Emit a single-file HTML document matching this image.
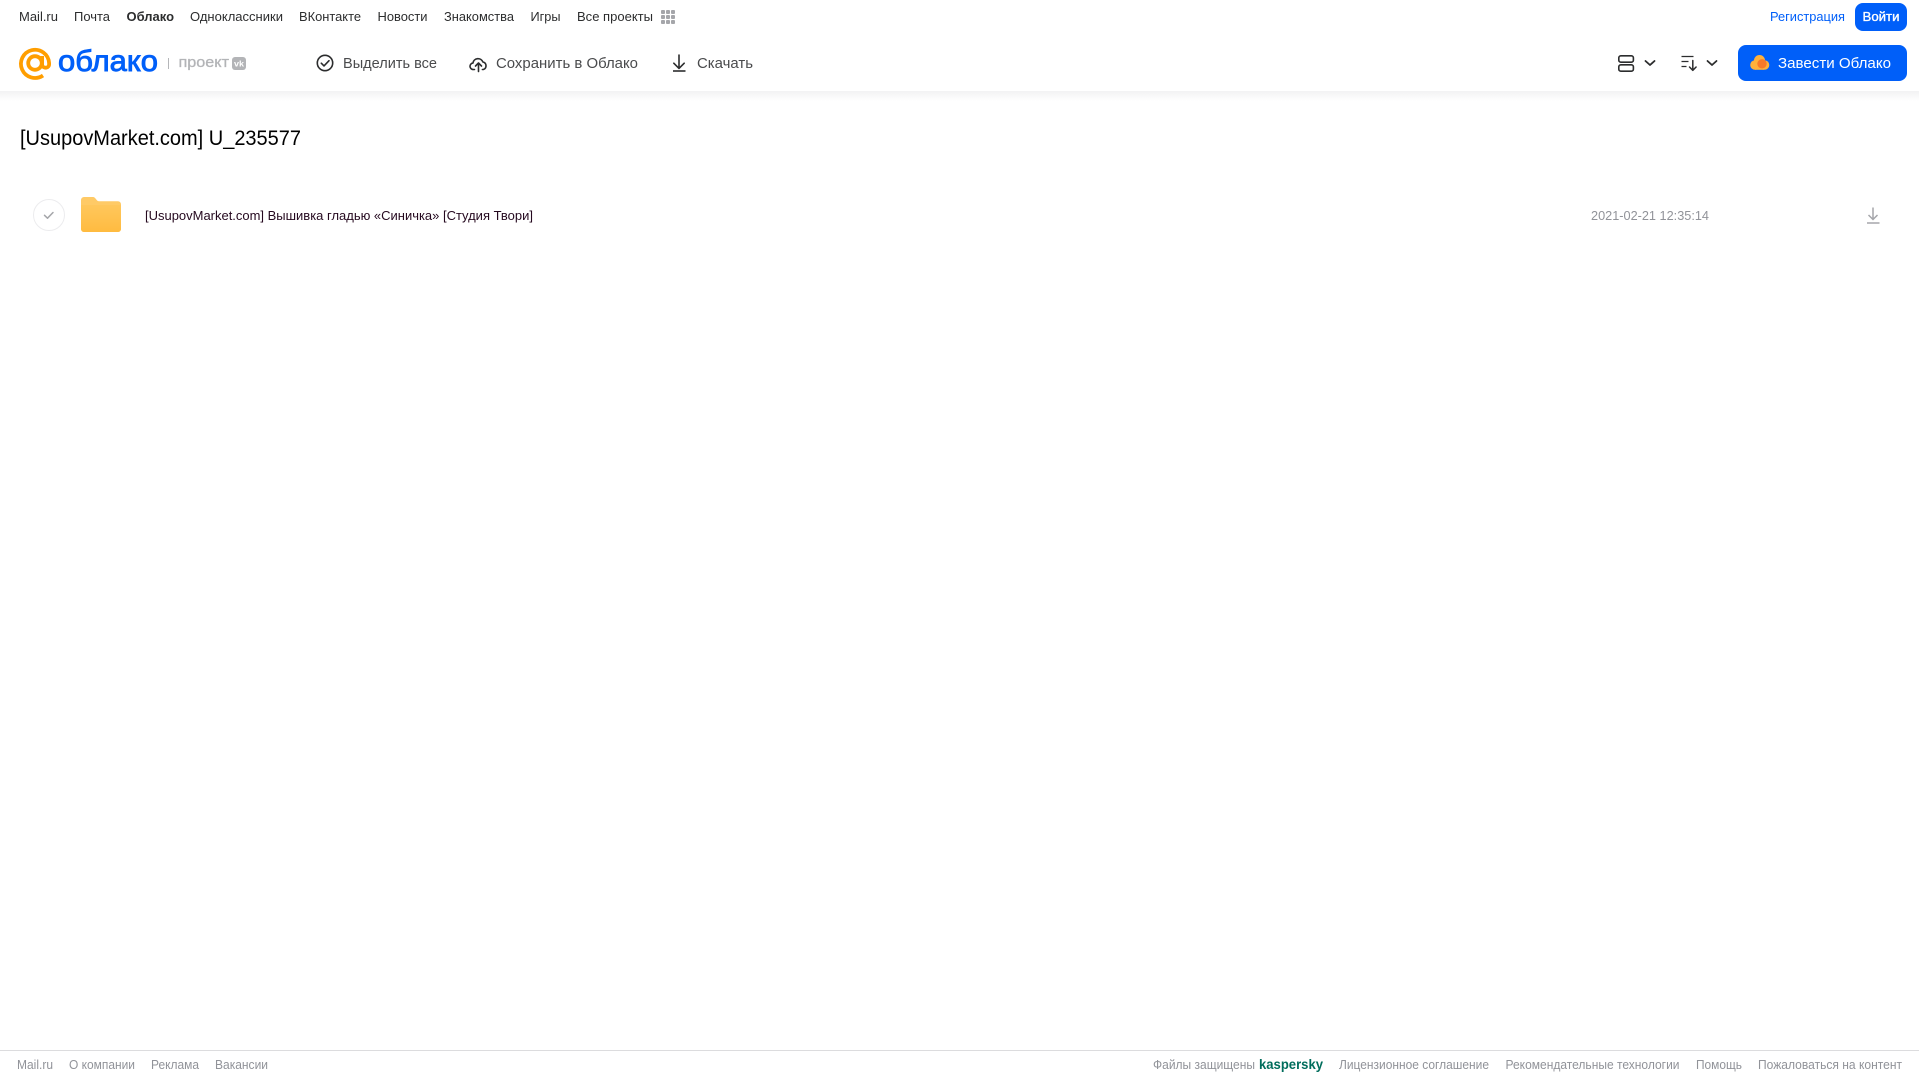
<!DOCTYPE html>
<html lang="ru">
<head>
<meta charset="utf-8">
<title>Облако</title>
<style>
html,body{margin:0;padding:0;width:1919px;height:1079px;background:#fff;overflow:hidden}
svg{display:block}
text{font-family:"Liberation Sans",sans-serif;dominant-baseline:auto;white-space:pre}
.n{font-size:13px;fill:#2c2d2e}
.t{font-size:15px;fill:#4a4b4d}
.f{font-size:12.5px;fill:#919399}
</style>
</head>
<body>
<svg width="1919" height="1079" viewBox="0 0 1919 1079" xmlns="http://www.w3.org/2000/svg">
<defs>
<linearGradient id="sh" x1="0" y1="0" x2="0" y2="1"><stop offset="0" stop-color="#f2f2f3"/><stop offset="1" stop-color="#fff"/></linearGradient>
<linearGradient id="fd" x1="0" y1="0" x2="0" y2="1"><stop offset="0" stop-color="#ffc75c"/><stop offset="1" stop-color="#ffbb40"/></linearGradient>
</defs>
<rect x="0" y="91" width="1919" height="10" fill="url(#sh)"/>

<!-- top nav -->
<text class="n" x="19" y="21" textLength="39" lengthAdjust="spacingAndGlyphs">Mail.ru</text>
<text class="n" x="74" y="21" textLength="36" lengthAdjust="spacingAndGlyphs">Почта</text>
<text class="n" x="126.500" y="21" textLength="47.500" lengthAdjust="spacingAndGlyphs" font-weight="700">Облако</text>
<text class="n" x="190" y="21" textLength="93" lengthAdjust="spacingAndGlyphs">Одноклассники</text>
<text class="n" x="299" y="21" textLength="62" lengthAdjust="spacingAndGlyphs">ВКонтакте</text>
<text class="n" x="377.500" y="21" textLength="50" lengthAdjust="spacingAndGlyphs">Новости</text>
<text class="n" x="444" y="21" textLength="70" lengthAdjust="spacingAndGlyphs">Знакомства</text>
<text class="n" x="530.500" y="21" textLength="30" lengthAdjust="spacingAndGlyphs">Игры</text>
<text class="n" x="577" y="21" textLength="76" lengthAdjust="spacingAndGlyphs">Все проекты</text>
<g fill="#a5a6aa">
<rect x="661" y="10" width="4" height="4" rx="1"/><rect x="666" y="10" width="4" height="4" rx="1"/><rect x="671" y="10" width="4" height="4" rx="1"/>
<rect x="661" y="15" width="4" height="4" rx="1"/><rect x="666" y="15" width="4" height="4" rx="1"/><rect x="671" y="15" width="4" height="4" rx="1"/>
<rect x="661" y="20" width="4" height="4" rx="1"/><rect x="666" y="20" width="4" height="4" rx="1"/><rect x="671" y="20" width="4" height="4" rx="1"/>
</g>
<text class="n" x="1770" y="21" textLength="75" lengthAdjust="spacingAndGlyphs" style="fill:#005ff9">Регистрация</text>
<rect x="1855" y="3" width="52" height="28" rx="8" fill="#005ff9"/>
<text class="n" x="1862.500" y="21" textLength="37" lengthAdjust="spacingAndGlyphs" stroke="#fff" stroke-width=".35" style="fill:#fff">Войти</text>

<!-- logo -->
<g fill="none" stroke="#ff9e00" stroke-width="3.800">
<circle cx="35" cy="63" r="6.800"/>
<path d="M43 75.500A14.100 14.100 0 1 1 49.100 63v1.200a3.500 3.500 0 0 1-7 0V56"/>
</g>
<text x="58" y="71" textLength="100" lengthAdjust="spacingAndGlyphs" font-size="30" stroke="#005ff9" stroke-width=".9" fill="#005ff9">облако</text>
<rect x="168" y="58" width="1" height="11" fill="#b5b6b9"/>
<text x="178.500" y="67" textLength="50.500" lengthAdjust="spacingAndGlyphs" font-size="15" stroke="#b3b4b7" stroke-width=".3" fill="#b3b4b7">проект</text>
<rect x="232" y="57" width="14" height="13" rx="3" fill="#b3b4b7"/>
<text x="234" y="66.500" textLength="10" lengthAdjust="spacingAndGlyphs" font-size="8" font-weight="700" fill="#fff">vk</text>

<!-- toolbar -->
<g fill="none" stroke="#2c2d2e" stroke-width="1.600">
<circle cx="325" cy="63" r="7.700"/>
<path d="M321.300 63.200l2.700 2.700 5-5.200" stroke-linecap="round" stroke-linejoin="round"/>
<path d="M474.500 69.500h-1a3.200 3.200 0 0 1-.6-6.400 5.200 5.200 0 0 1 10-1.100 3.900 3.900 0 0 1 .5 7.500h-1" stroke-linecap="round" stroke-linejoin="round"/>
<path d="M478.500 71.500v-8M475.500 66l3-3 3 3" stroke-linecap="round" stroke-linejoin="round"/>
<path d="M679 55v13M673.800 63.200l5.200 5.200 5.200-5.200" stroke-linecap="round" stroke-linejoin="round"/>
<path d="M673 71h12.500"/>
</g>
<text class="t" x="343" y="68" textLength="94" lengthAdjust="spacingAndGlyphs">Выделить все</text>
<text class="t" x="496" y="68" textLength="142" lengthAdjust="spacingAndGlyphs">Сохранить в Облако</text>
<text class="t" x="697" y="68" textLength="56" lengthAdjust="spacingAndGlyphs">Скачать</text>

<!-- right controls -->
<g fill="none" stroke="#2c2d2e" stroke-width="1.600">
<rect x="1618.800" y="55.800" width="14.600" height="6.400" rx="2"/>
<rect x="1618.800" y="64.800" width="14.600" height="6.400" rx="2"/>
<path d="M1645.500 61l4.500 4 4.500-4" stroke-width="1.800" stroke-linecap="round" stroke-linejoin="round"/>
<path d="M1707.500 61l4.500 4 4.500-4" stroke-width="1.800" stroke-linecap="round" stroke-linejoin="round"/>
<path d="M1681.500 56.500h12M1681.500 61.500h7M1681.500 66.500h5" stroke-width="1.300"/>
<path d="M1692.800 60.500v9.500M1689.500 67l3.300 3.300 3.300-3.300" stroke-width="1.500" stroke-linecap="round" stroke-linejoin="round"/>
</g>
<rect x="1738" y="45" width="169" height="36" rx="8" fill="#005ff9"/>
<g fill="#ffb13b">
<circle cx="1759.500" cy="60.500" r="5.500"/>
<circle cx="1755" cy="65" r="4.800"/>
<circle cx="1764.500" cy="65" r="4.800"/>
<rect x="1755" y="62" width="9" height="7.800"/>
</g>
<circle cx="1762" cy="63.800" r="4.700" fill="#f7792a"/>
<text class="t" x="1778" y="68" textLength="113" lengthAdjust="spacingAndGlyphs" style="fill:#fff">Завести Облако</text>

<!-- title -->
<text x="20" y="145" textLength="281" lengthAdjust="spacingAndGlyphs" font-size="21" fill="#000">[UsupovMarket.com] U_235577</text>

<!-- row -->
<circle cx="49" cy="215" r="15.500" fill="#fff" stroke="#ececee" stroke-width="1"/>
<path d="M44.500 215.300l3 2.900 5.500-5.700" fill="none" stroke="#a5a6aa" stroke-width="1.500" stroke-linecap="round" stroke-linejoin="round"/>
<path d="M81 200a3 3 0 0 1 3-3h8.500c2 0 2.600 1 3.600 2.200 1 1.200 1.600 2 3 2H118a3 3 0 0 1 3 3V229a3 3 0 0 1-3 3H84a3 3 0 0 1-3-3z" fill="#ffca66"/>
<path d="M81 205h40v24a3 3 0 0 1-3 3H84a3 3 0 0 1-3-3z" fill="url(#fd)"/>
<text x="145" y="220" textLength="388" lengthAdjust="spacingAndGlyphs" font-size="13" fill="#25091f">[UsupovMarket.com] Вышивка гладью «Синичка» [Студия Твори]</text>
<text x="1591" y="220" textLength="118" lengthAdjust="spacingAndGlyphs" font-size="13" fill="#919399">2021-02-21 12:35:14</text>
<g fill="none" stroke="#a5a6aa" stroke-width="1.500">
<path d="M1873 207.500v12M1868.500 215l4.500 4.500 4.500-4.500"/>
<path d="M1867 223h12.500"/>
</g>

<!-- footer -->
<rect x="0" y="1050" width="1919" height="1" fill="#dcdcde"/>
<text class="f" x="17" y="1069" textLength="36" lengthAdjust="spacingAndGlyphs">Mail.ru</text>
<text class="f" x="69" y="1069" textLength="66" lengthAdjust="spacingAndGlyphs">О компании</text>
<text class="f" x="151" y="1069" textLength="48" lengthAdjust="spacingAndGlyphs">Реклама</text>
<text class="f" x="215" y="1069" textLength="53" lengthAdjust="spacingAndGlyphs">Вакансии</text>
<text class="f" x="1153" y="1069" textLength="102" lengthAdjust="spacingAndGlyphs">Файлы защищены</text>
<text x="1259" y="1069" textLength="64" lengthAdjust="spacingAndGlyphs" font-size="13.500" font-weight="700" fill="#006d5c">kaspersky</text>
<text class="f" x="1339" y="1069" textLength="150" lengthAdjust="spacingAndGlyphs">Лицензионное соглашение</text>
<text class="f" x="1505.500" y="1069" textLength="174" lengthAdjust="spacingAndGlyphs">Рекомендательные технологии</text>
<text class="f" x="1696" y="1069" textLength="46" lengthAdjust="spacingAndGlyphs">Помощь</text>
<text class="f" x="1758" y="1069" textLength="144" lengthAdjust="spacingAndGlyphs">Пожаловаться на контент</text>
</svg>
</body>
</html>
